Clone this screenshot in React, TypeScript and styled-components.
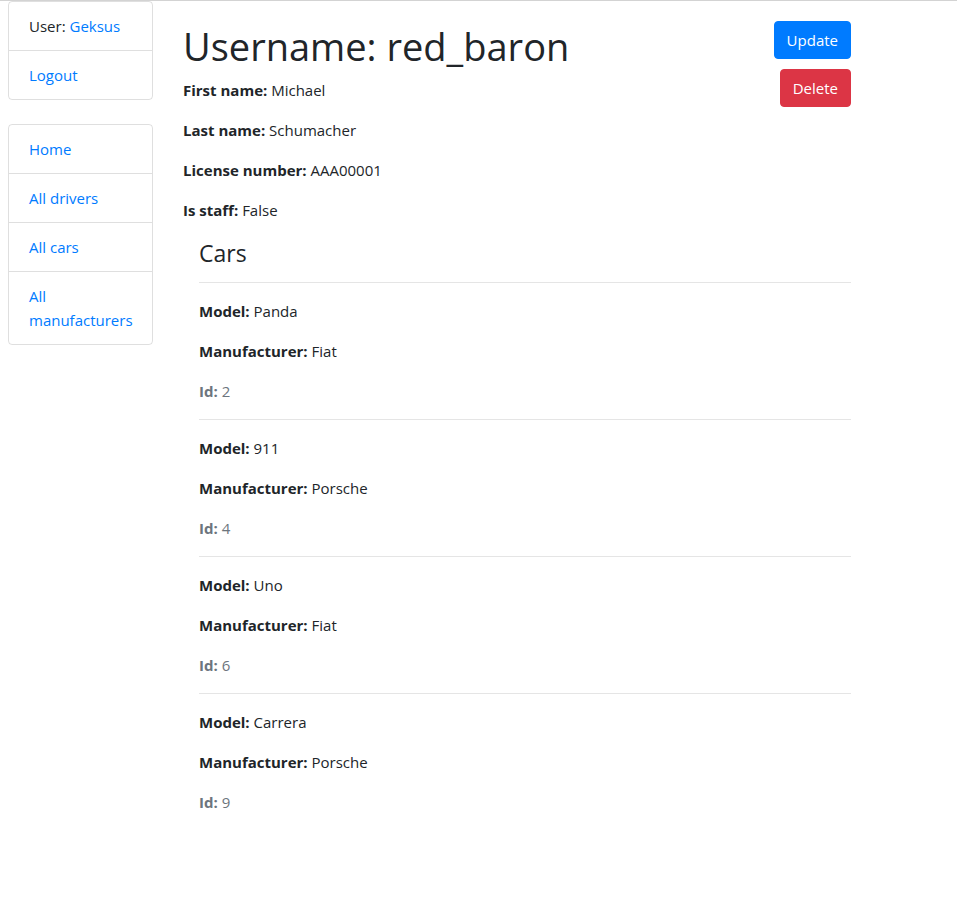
import React from "react";
import styled, { createGlobalStyle } from "styled-components";

const Global = createGlobalStyle`
  html, body { margin: 0; padding: 0; background: #fff; }
  body {
    font-family: "Segoe UI", "Open Sans", "Liberation Sans", sans-serif;
    font-size: 15px;
    line-height: 24px;
    color: #212529;
  }
  * { box-sizing: border-box; }
`;

const Page = styled.div`
  border-top: 1px solid #d3d3d3;
  display: flex;
  align-items: flex-start;
  padding: 0 8px;
  min-height: 919px;
`;

const Sidebar = styled.nav`
  width: 145px;
  flex: none;
  display: flex;
  flex-direction: column;
  gap: 24px;
`;

const ListGroup = styled.ul`
  list-style: none;
  margin: 0;
  padding: 0;
  border: 1px solid rgba(0, 0, 0, 0.125);
  border-radius: 4px;
`;

const ListItem = styled.li`
  padding: 12px 20px;
  border-top: 1px solid rgba(0, 0, 0, 0.125);
  &:first-child { border-top: none; }
`;

const Link = styled.a`
  color: #007bff;
  text-decoration: none;
`;

const Main = styled.main`
  width: 668px;
  margin-left: 30px;
  padding-top: 20px;
`;

const Actions = styled.div`
  float: right;
  display: flex;
  flex-direction: column;
  align-items: flex-end;
  gap: 10px;
`;

const Button = styled.button<{ $variant: "primary" | "danger" }>`
  font: inherit;
  font-size: 15px;
  line-height: 24px;
  padding: 6px 12px;
  border-radius: 4px;
  border: 1px solid ${(p) => (p.$variant === "primary" ? "#007bff" : "#dc3545")};
  background: ${(p) => (p.$variant === "primary" ? "#007bff" : "#dc3545")};
  color: #fff;
  cursor: pointer;
`;

const Title = styled.h1`
  font-size: 38px;
  font-weight: 500;
  line-height: 48px;
  margin: 1px 0 8px;
`;

const Field = styled.p<{ $muted?: boolean }>`
  margin: 0 0 16px;
  color: ${(p) => (p.$muted ? "#6c757d" : "inherit")};
`;

const Label = styled.strong`
  font-weight: 700;
`;

const CarsSection = styled.section`
  margin-left: 16px;
  padding-top: 1px;
  clear: both;
`;

const SectionTitle = styled.h4`
  font-size: 23px;
  font-weight: 500;
  line-height: 29px;
  margin: 0 0 14px;
`;

const CarCard = styled.div`
  border-top: 1px solid rgba(0, 0, 0, 0.1);
  padding: 16px 0;
  & > p:last-child { margin-bottom: 0; }
`;

const cars = [
  { model: "Panda", manufacturer: "Fiat", id: 2 },
  { model: "911", manufacturer: "Porsche", id: 4 },
  { model: "Uno", manufacturer: "Fiat", id: 6 },
  { model: "Carrera", manufacturer: "Porsche", id: 9 },
];

export default function App() {
  return (
    <>
      <Global />
      <Page>
        <Sidebar>
          <ListGroup>
            <ListItem>
              User: <Link href="#">Geksus</Link>
            </ListItem>
            <ListItem>
              <Link href="#">Logout</Link>
            </ListItem>
          </ListGroup>
          <ListGroup>
            <ListItem><Link href="#">Home</Link></ListItem>
            <ListItem><Link href="#">All drivers</Link></ListItem>
            <ListItem><Link href="#">All cars</Link></ListItem>
            <ListItem><Link href="#">All manufacturers</Link></ListItem>
          </ListGroup>
        </Sidebar>
        <Main>
          <Actions>
            <Button $variant="primary">Update</Button>
            <Button $variant="danger">Delete</Button>
          </Actions>
          <Title>Username: red_baron</Title>
          <Field><Label>First name:</Label> Michael</Field>
          <Field><Label>Last name:</Label> Schumacher</Field>
          <Field><Label>License number:</Label> AAA00001</Field>
          <Field><Label>Is staff:</Label> False</Field>
          <CarsSection>
            <SectionTitle>Cars</SectionTitle>
            {cars.map((c) => (
              <CarCard key={c.id}>
                <Field><Label>Model:</Label> {c.model}</Field>
                <Field><Label>Manufacturer:</Label> {c.manufacturer}</Field>
                <Field $muted><Label>Id:</Label> {c.id}</Field>
              </CarCard>
            ))}
          </CarsSection>
        </Main>
      </Page>
    </>
  );
}
